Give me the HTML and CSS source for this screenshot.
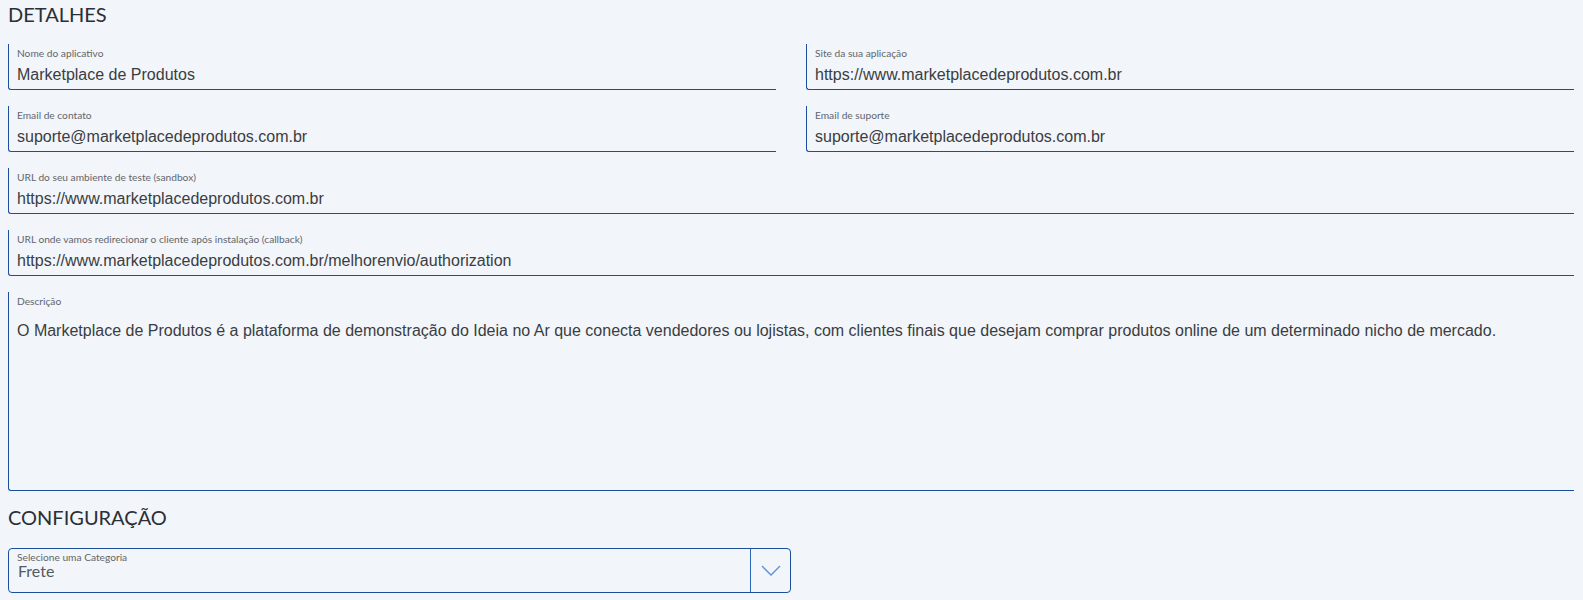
FILE: index.html
```html
<!DOCTYPE html>
<html lang="pt-BR">
<head>
<meta charset="utf-8">
<title>Detalhes do aplicativo</title>
<link rel="stylesheet" href="styles.css">
</head>
<body>
<main class="page">
  <h2 class="section-title">DETALHES</h2>
  <div class="grid">
    <label class="field">
      <span class="field-label">Nome do aplicativo</span>
      <input class="field-input" type="text" value="Marketplace de Produtos">
    </label>
    <label class="field">
      <span class="field-label">Site da sua aplicação</span>
      <input class="field-input" type="text" value="https://www.marketplacedeprodutos.com.br">
    </label>
    <label class="field">
      <span class="field-label">Email de contato</span>
      <input class="field-input" type="text" value="suporte@marketplacedeprodutos.com.br">
    </label>
    <label class="field">
      <span class="field-label">Email de suporte</span>
      <input class="field-input" type="text" value="suporte@marketplacedeprodutos.com.br">
    </label>
    <label class="field field-wide">
      <span class="field-label">URL do seu ambiente de teste (sandbox)</span>
      <input class="field-input" type="text" value="https://www.marketplacedeprodutos.com.br">
    </label>
    <label class="field field-wide">
      <span class="field-label">URL onde vamos redirecionar o cliente após instalação (callback)</span>
      <input class="field-input" type="text" value="https://www.marketplacedeprodutos.com.br/melhorenvio/authorization">
    </label>
    <label class="field field-wide field-area">
      <span class="field-label">Descrição</span>
      <textarea class="field-textarea">O Marketplace de Produtos é a plataforma de demonstração do Ideia no Ar que conecta vendedores ou lojistas, com clientes finais que desejam comprar produtos online de um determinado nicho de mercado.</textarea>
    </label>
  </div>

  <h2 class="section-title section-config">CONFIGURAÇÃO</h2>
  <div class="select">
    <div class="select-main">
      <span class="field-label select-label">Selecione uma Categoria</span>
      <span class="select-value">Frete</span>
    </div>
    <div class="select-arrow">
      <svg width="20" height="11" viewBox="0 0 20 11" aria-hidden="true">
        <path d="M1 1 L10 10 L19 1" fill="none" stroke="#5a8fd4" stroke-width="1.3"/>
      </svg>
    </div>
  </div>
</main>
</body>
</html>
```

FILE: styles.css
```css
* {
  box-sizing: border-box;
}

html, body {
  margin: 0;
  padding: 0;
  background: #f2f5f9;
}

body {
  font-family: Lato, "Open Sans", sans-serif;
  color: #333333;
}

.page {
  width: 1566px;
  margin-left: 8px;
  padding-top: 2px;
}

.section-title {
  margin: 0;
  font-family: Lato, sans-serif;
  font-weight: 400;
  font-size: 20px;
  line-height: 24px;
  color: #2b2f36;
}

.grid {
  margin-top: 18px;
  display: grid;
  grid-template-columns: 768px 768px;
  column-gap: 30px;
  row-gap: 16px;
}

.field {
  display: flex;
  flex-direction: column;
  height: 46px;
  padding: 3px 8px 4px 8px;
  border-left: 1px solid #1b4f9c;
  border-bottom: 1px solid #1b4f9c;
  border-bottom-left-radius: 3px;
}

.field-wide {
  grid-column: 1 / 3;
}

.field-label {
  display: block;
  font-family: Lato, sans-serif;
  font-size: 10.2px;
  line-height: 12px;
  color: #62666d;
}

.field-input {
  display: block;
  margin: 6px 0 0 0;
  padding: 0;
  height: 20px;
  width: 100%;
  border: none;
  outline: none;
  background: transparent;
  font-family: "Liberation Sans", Arial, sans-serif;
  font-size: 16px;
  color: #3a3d42;
}

.field-area {
  height: 199px;
}

.field-textarea {
  display: block;
  margin: 15px 0 0 0;
  padding: 0;
  height: 161px;
  width: 100%;
  border: none;
  outline: none;
  resize: none;
  background: transparent;
  font-family: "Liberation Sans", Arial, sans-serif;
  font-size: 16px;
  line-height: normal;
  color: #3a3d42;
  overflow: hidden;
}

.section-config {
  margin-top: 14px;
}

.select {
  margin-top: 19px;
  display: flex;
  width: 783px;
  height: 45px;
  border: 1px solid #1b4f9c;
  border-radius: 4px;
}

.select-main {
  flex: 1;
  padding: 2px 8px 0 8px;
}

.select-value {
  display: block;
  margin-top: -2px;
  font-family: Lato, sans-serif;
  font-size: 16px;
  line-height: 19px;
  color: #555a61;
  padding-left: 1px;
}

.select-arrow {
  width: 40px;
  border-left: 1px solid #2a67b8;
  display: flex;
  align-items: center;
  justify-content: center;
}
```
